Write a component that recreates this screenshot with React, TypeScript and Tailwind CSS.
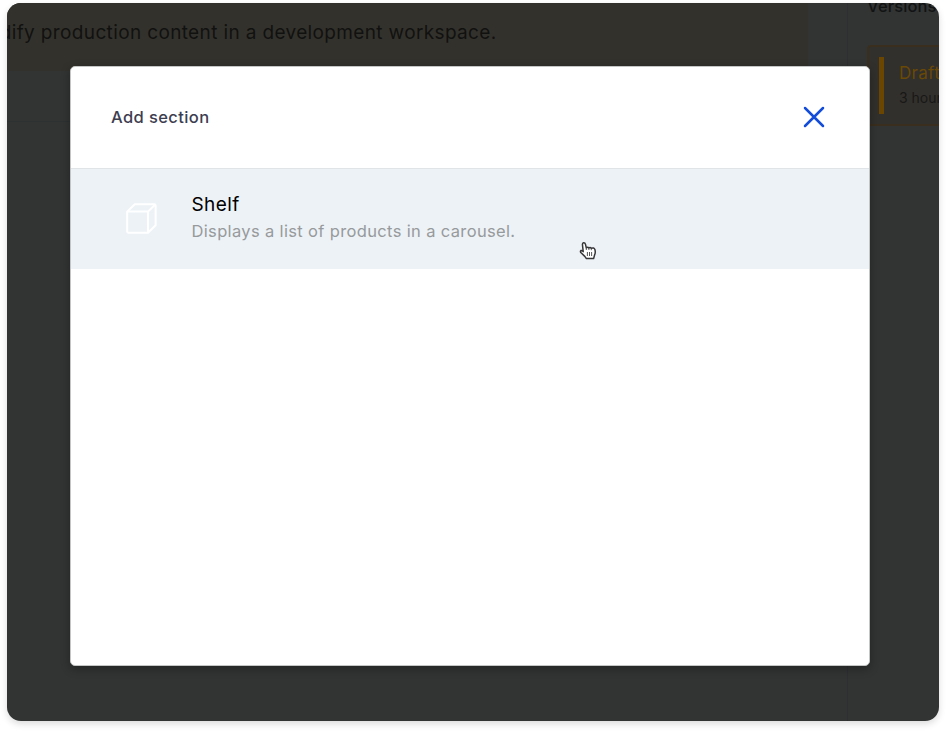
function Versions() {
  return (
    <aside className="w-[92px] shrink-0 overflow-hidden border-l border-[#2d3030] pl-[19px]">
      <h2 className="-mt-[9px] h-[51px] whitespace-nowrap text-[16.5px] font-medium leading-[24px] tracking-[0.1px] text-[#121313]">
        Versions
      </h2>
      <div className="flex h-[81px] w-[260px] rounded-[4px] border-2 border-[#3a2f1e] bg-[#32302c] py-[10px] pl-[10px]">
        <div className="w-[5px] bg-[#6a4600]" />
        <div className="whitespace-nowrap pl-[15px]">
          <div className="mt-[4px] text-[17px] leading-[24px] tracking-[0.3px] text-[#6a4806]">Draft</div>
          <div className="mt-[2px] text-[14px] leading-[22px] text-[#181817]">3 hours ago</div>
        </div>
      </div>
    </aside>
  );
}

function Page() {
  return (
    <div className="flex h-full">
      <main className="min-w-0 flex-1">
        <div className="h-[68px] w-[801px] overflow-hidden bg-[#33312c] pt-[15px]">
          <p className="-ml-[36px] whitespace-nowrap text-[19px] leading-[30px] tracking-[0.36px] text-[#111110]">
            modify production content in a development workspace.
          </p>
        </div>
        <div className="h-[51px] border-b border-[#2e3131]" />
      </main>
      <Versions />
    </div>
  );
}

function BoxIcon() {
  return (
    <svg width="32" height="32" viewBox="0 0 32 32" fill="none" stroke="#fff" strokeWidth="2" strokeLinejoin="round">
      <path d="M1.2 8.6 8.8 1.2H28.3q1.3 0 1.3 1.3V22.2L22 29.8H2.5Q1.2 29.8 1.2 28.5Z" />
      <path d="M1.2 8.6H22V29.8M22 8.6 29.2 1.5" />
    </svg>
  );
}

function HandCursor() {
  return (
    <svg width="18" height="20" viewBox="0 0 18 20" fill="none" className="absolute left-[508px] top-[174px]">
      <path
        d="M4.2 10.7 3.5 4.1Q3.2 2 4.6 1.7 6 1.5 6.5 3.4L7.3 6.8Q8.8 5.7 9.9 7 11.2 6 12.3 7.3 14.9 6.1 15.9 8.5 16.8 11.7 15.5 14.2L14.6 17.6H7.4L5.8 15.4 1.8 11.5Q1 10.2 2.1 9.5 3.2 9.2 4.2 10.7Z"
        fill="#fff"
        stroke="#363636"
        strokeWidth="1.5"
        strokeLinejoin="round"
      />
      <path d="M7.3 6.8V9M9.9 7V9M12.3 7.3V9.2M8.4 11V15M10.5 11V15M12.6 11V15" stroke="#444" strokeWidth="0.9" />
    </svg>
  );
}

function AddSectionDialog() {
  return (
    <section className="absolute left-[63px] top-[63px] h-[600px] w-[800px] overflow-hidden rounded-[5px] border border-[#c4c5c5] bg-white shadow-[0_3px_10px_rgba(0,0,0,0.3)]">
      <header className="flex h-[102px] items-center justify-between border-b border-[#e1e4e6] pb-[2px] pl-[40px] pr-[44px]">
        <h1 className="text-[16.5px] font-[450] leading-[24px] tracking-[0.4px] text-[#3d3d50]">Add section</h1>
        <button aria-label="Close" className="h-[22px] w-[22px]">
          <svg width="22" height="22" viewBox="0 0 22 22" stroke="#134cd8" strokeWidth="2.5" strokeLinecap="round">
            <path d="M2 2 20 20M20 2 2 20" />
          </svg>
        </button>
      </header>
      <div className="flex h-[100px] bg-[#edf2f6] pl-[55px]">
        <div className="mt-[34px] w-[65.5px]">
          <BoxIcon />
        </div>
        <div className="pt-[22px]">
          <h2 className="text-[19px] leading-[28px] tracking-[0.4px] text-black">Shelf</h2>
          <p className="-mt-px text-[16.5px] leading-[26px] tracking-[0.35px] text-[#979a9c]">
            Displays a list of products in a carousel.
          </p>
        </div>
      </div>
      <HandCursor />
    </section>
  );
}

export default function App() {
  return (
    <div className="h-[732px] w-[946px] overflow-hidden bg-white pl-[7px] pt-[3px] font-['Inter',sans-serif]">
      <div className="relative h-[718px] w-[932px] overflow-hidden rounded-[14px] bg-[#313433] shadow-[0_3px_7px_rgba(0,0,0,0.14)]">
        <Page />
        <AddSectionDialog />
      </div>
    </div>
  );
}
